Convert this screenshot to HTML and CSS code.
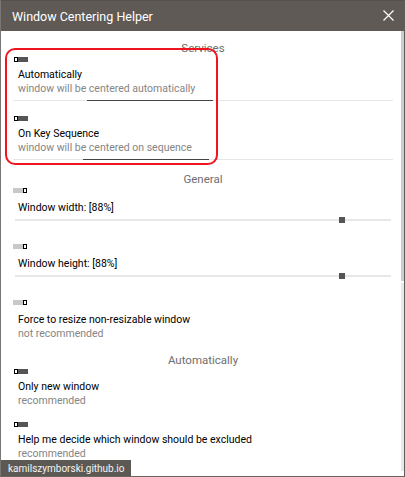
FILE: index.html
```html
<!DOCTYPE html>
<html lang="en">
<head>
  <meta charset="UTF-8">
  <meta name="viewport" content="width=device-width, initial-scale=1.0">
  <title>Window Centering Helper</title>
  <link rel="stylesheet" href="styles.css">
</head>
<body>
  <div class="window">
    <header class="titlebar">
      <span class="title">Window Centering Helper</span>
      <svg class="close" width="11" height="11" viewBox="0 0 11 11">
        <path d="M0.5 0.5 L10.5 10.5 M10.5 0.5 L0.5 10.5" stroke="#fff" stroke-width="1.2" fill="none"/>
      </svg>
    </header>

    <div class="frame">
      <main class="content">
        <!-- services -->
        <section class="section services">
          <h3 class="section-title">Services</h3>
          <div class="item">
            <span class="toggle on"></span>
            <div class="label">Automatically</div>
            <div class="hint">window will be centered automatically</div>
            <div class="rule"><span class="rule-mark mark-a"></span></div>
          </div>
          <div class="item">
            <span class="toggle on"></span>
            <div class="label">On Key Sequence</div>
            <div class="hint">window will be centered on sequence</div>
            <div class="rule"><span class="rule-mark mark-b"></span></div>
          </div>
        </section>

        <!-- general -->
        <section class="section general">
          <h3 class="section-title">General</h3>
          <div class="item">
            <span class="toggle"></span>
            <div class="label">Window width: [88%]</div>
            <div class="slider"><span class="knob" style="--value: 0.88"></span></div>
          </div>
          <div class="item">
            <span class="toggle"></span>
            <div class="label">Window height: [88%]</div>
            <div class="slider"><span class="knob" style="--value: 0.88"></span></div>
          </div>
          <div class="item">
            <span class="toggle"></span>
            <div class="label">Force to resize non-resizable window</div>
            <div class="hint">not recommended</div>
          </div>
        </section>

        <!-- automatically -->
        <section class="section auto">
          <h3 class="section-title">Automatically</h3>
          <div class="item">
            <span class="toggle on"></span>
            <div class="label">Only new window</div>
            <div class="hint">recommended</div>
          </div>
          <div class="item">
            <span class="toggle on"></span>
            <div class="label">Help me decide which window should be excluded</div>
            <div class="hint">recommended</div>
          </div>
        </section>
      </main>

      <div class="scrollbar">
        <div class="scroll-thumb"></div>
        <div class="scroll-track"></div>
      </div>
    </div>

    <div class="highlight"></div>
    <div class="status">kamilszymborski.github.io</div>
  </div>
</body>
</html>
```

FILE: styles.css
```css
html, body {
  margin: 0;
  padding: 0;
  background: #fff;
}
body {
  font-family: Roboto, "Noto Sans", sans-serif;
  color: #000;
}
.window {
  position: relative;
  width: 405px;
  height: 477px;
  box-sizing: border-box;
  border-left: 1px solid #7a7673;
  border-right: 1px solid #5f5b57;
  border-bottom: 1px solid #6a6662;
  display: flex;
  flex-direction: column;
  overflow: hidden;
}
.titlebar {
  height: 31px;
  flex: none;
  background-color: #5f5a56;
  border-top: 1px solid #54504c;
  box-sizing: border-box;
  display: flex;
  align-items: center;
  justify-content: space-between;
  padding: 0 11px 0 12px;
  margin-left: -1px;
  margin-right: -1px;
}
.title {
  color: #fff;
  font-size: 12.5px;
}
.close {
  display: block;
  margin-top: -1px;
}
.frame {
  flex: 1;
  display: flex;
  min-height: 0;
}
.content {
  flex: 1;
  padding: 9px 8px 0 12px;
  overflow: hidden;
}
.scrollbar {
  width: 3px;
  flex: none;
  display: flex;
  flex-direction: column;
  padding-bottom: 5px;
}
.scroll-thumb {
  height: 250px;
  background-color: #cdcdcd;
}
.scroll-track {
  flex: 1;
  margin-top: 2px;
  background-color: #e8e8e8;
}

.section-title {
  margin: 0 0 1px;
  font-weight: normal;
  font-size: 11.5px;
  line-height: 16px;
  color: #6e6e6e;
  text-align: center;
}
.general {
  margin-top: 11px;
}
.auto {
  margin-top: 11px;
}
.services .item + .item {
  margin-top: 15px;
}
.general .item + .item {
  margin-top: 21px;
}
.auto .item + .item {
  margin-top: 14px;
}

.item {
  display: flex;
  flex-direction: column;
  align-items: flex-start;
}
.label {
  font-size: 10.5px;
  line-height: 14px;
  margin-left: 5px;
  color: #000;
  padding-top: 1px;
}
.hint {
  font-size: 10.5px;
  line-height: 14px;
  margin-left: 5px;
  color: #858585;
}
.general .label {
  margin-top: 2px;
}

.toggle {
  display: flex;
  width: 14px;
  height: 5px;
  margin: 0 0 5px 1px;
  background-color: #c8c8c8;
  justify-content: flex-end;
}
.toggle::before {
  content: "";
  width: 4px;
  height: 5px;
  box-sizing: border-box;
  border: 1px solid #000;
  background: #fff;
}
.toggle.on {
  background-color: #555;
  justify-content: flex-start;
}
.general .toggle {
  margin-left: 0;
}

.rule {
  align-self: stretch;
  height: 1px;
  margin-top: 4px;
  background-color: #e6e6e6;
  display: flex;
}
.rule-mark {
  width: 126px;
  background-color: #444;
}
.mark-a {
  margin-left: 74px;
}
.mark-b {
  margin-left: 70px;
}

.slider {
  align-self: stretch;
  height: 6px;
  margin: 2px 2px 0 2px;
  background: linear-gradient(#e8e8e8, #e8e8e8) center / 100% 2px no-repeat;
  display: flex;
}
.knob {
  width: 6px;
  height: 6px;
  background-color: #555;
  margin-left: calc((100% - 6px) * var(--value) - 2px);
}

.highlight {
  position: absolute;
  left: 4px;
  top: 48px;
  width: 213px;
  height: 117px;
  box-sizing: border-box;
  border: 2px solid #f0141e;
  border-radius: 10px;
}
.status {
  position: absolute;
  left: -1px;
  bottom: -1px;
  height: 17px;
  padding: 0 6px 0 8px;
  background-color: #5c5955;
  color: #f4f4f4;
  font-size: 10px;
  line-height: 17px;
}
```
